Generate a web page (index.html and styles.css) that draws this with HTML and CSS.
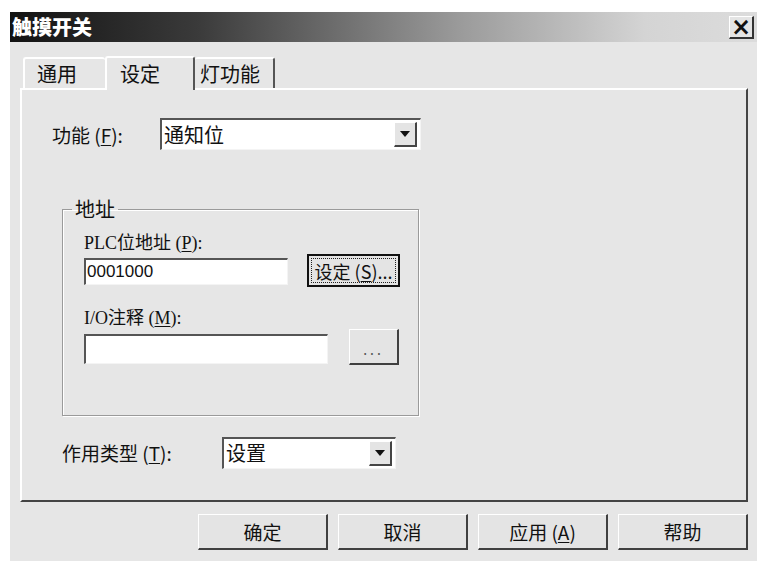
FILE: index.html
```html
<!DOCTYPE html>
<html lang="zh">
<head>
<meta charset="utf-8">
<link rel="stylesheet" href="styles.css">
</head>
<body>
<div class="dialog">
  <div class="titlebar">
    <span class="title">触摸开关</span>
    <span class="close">×</span>
  </div>
  <div class="tabs">
    <div class="tab tab-first">通用</div>
    <div class="tab tab-active">设定</div>
    <div class="tab tab-last">灯功能</div>
  </div>
  <div class="panel">
    <div class="row row-func">
      <span class="label label-func">功能 (<u>F</u>):</span>
      <div class="combo combo-func">
        <span class="combo-text">通知位</span>
        <span class="combo-btn"><i class="arrow"></i></span>
      </div>
    </div>
    <fieldset class="group">
      <legend>地址</legend>
      <div class="field-label">PLC位地址 (<u>P</u>):</div>
      <div class="field-row">
        <div class="input input-addr">0001000</div>
        <div class="btn btn-set"><span class="focus">设定 (<u>S</u>)...</span></div>
      </div>
      <div class="field-label field-label2">I/O注释 (<u>M</u>):</div>
      <div class="field-row">
        <div class="input input-note"></div>
        <div class="btn btn-dots">...</div>
      </div>
    </fieldset>
    <div class="row row-type">
      <span class="label label-type">作用类型 (<u>T</u>):</span>
      <div class="combo combo-type">
        <span class="combo-text">设置</span>
        <span class="combo-btn"><i class="arrow"></i></span>
      </div>
    </div>
  </div>
  <div class="buttons">
    <div class="btn btn-main">确定</div>
    <div class="btn btn-main">取消</div>
    <div class="btn btn-main">应用 (<u>A</u>)</div>
    <div class="btn btn-main">帮助</div>
  </div>
</div>
</body>
</html>
```

FILE: styles.css
```css
* { box-sizing: border-box; }
html, body { margin: 0; padding: 0; background: #ffffff; }
body {
  padding: 12px 0 0 10px;
  font-family: "Noto Sans CJK SC", "DejaVu Sans", sans-serif;
  font-size: 19px;
  color: #111;
}
u { text-decoration: underline; text-underline-offset: 2px; }

.dialog {
  width: 747px;
  height: 549px;
  background: #e6e6e6;
  display: flex;
  flex-direction: column;
}

.titlebar {
  height: 30px;
  background: linear-gradient(to right, #121212 0%, #3a3a3a 25%, #9a9a9a 60%, #d4d4d4 85%, #dcdcdc 100%);
  display: flex;
  align-items: center;
  justify-content: space-between;
  padding: 0 3px 0 2px;
}
.title {
  color: #fff;
  font-weight: 900;
  font-size: 20px;
  line-height: 30px;
}
.close {
  width: 25px;
  height: 23px;
  background: #e4e4e4;
  border-top: 1px solid #fff;
  border-left: 1px solid #fff;
  border-right: 2px solid #333;
  border-bottom: 2px solid #333;
  display: flex;
  align-items: center;
  justify-content: center;
  font-family: "DejaVu Sans", sans-serif;
  font-weight: bold;
  font-size: 24px;
  line-height: 1;
  color: #111;
}

.tabs {
  display: flex;
  align-items: flex-end;
  padding-left: 13px;
  margin-top: 12px;
  height: 34px;
}
.tab {
  height: 31px;
  border-top: 2px solid #fff;
  border-left: 2px solid #fff;
  border-right: 2px solid #555;
  padding: 0 14px;
  display: flex;
  align-items: center;
  font-size: 20px;
  white-space: nowrap;
  border-radius: 3px 3px 0 0;
}
.tab-first { width: 82px; padding-left: 12px; border-right: none; }
.tab-active {
  height: 34px;
  width: 90px;
  padding-left: 13px;
  align-items: flex-start;
  padding-top: 1px;
  margin-bottom: -2px;
  background: #e6e6e6;
  position: relative;
  z-index: 1;
}
.tab-last { width: 80px; padding: 0 0 0 5px; border-left: none; }

.panel {
  margin: 0 9px 0 10px;
  height: 414px;
  border-top: 2px solid #fff;
  border-left: 2px solid #fff;
  border-right: 2px solid #444;
  border-bottom: 2px solid #444;
  display: flex;
  flex-direction: column;
}

.row { display: flex; align-items: center; }
.row-func { margin-top: 28px; padding-left: 30px; height: 32px; }
.label-func { width: 108px; font-size: 19px; }

.combo {
  height: 32px;
  background: #fff;
  border-top: 2px solid #555;
  border-left: 2px solid #555;
  border-right: 1px solid #f4f4f4;
  border-bottom: 1px solid #f4f4f4;
  display: flex;
  align-items: center;
  justify-content: space-between;
  padding: 0 3px 0 2px;
}
.combo-func { width: 261px; }
.combo-text { font-size: 20px; line-height: 1; }
.combo-btn {
  width: 23px;
  height: 25px;
  background: #e4e4e4;
  border-top: 1px solid #fff;
  border-left: 1px solid #fff;
  border-right: 2px solid #444;
  border-bottom: 2px solid #444;
  display: flex;
  align-items: center;
  justify-content: center;
}
.arrow {
  display: block;
  width: 0;
  height: 0;
  border-left: 5px solid transparent;
  border-right: 5px solid transparent;
  border-top: 6px solid #111;
}

.group {
  margin: 48px 0 0 40px;
  width: 357px;
  height: 218px;
  padding: 10px 0 0 21px;
  border: 1px solid #9a9a9a;
  box-shadow: inset 1px 1px 0 #fff, 1px 1px 0 #fff;
}
.group legend {
  padding: 0 3px;
  margin-left: -12px;
  font-size: 20px;
  line-height: 22px;
}
.field-label {
  font-size: 18px;
  line-height: 22px;
  margin-top: 2px;
  font-family: "Liberation Serif", "Noto Sans CJK SC", serif;
}
.field-label2 { margin-top: 20px; }
.field-row { display: flex; align-items: center; }
.input {
  height: 27px;
  background: #fff;
  border-top: 2px solid #555;
  border-left: 2px solid #555;
  border-right: 1px solid #f4f4f4;
  border-bottom: 1px solid #f4f4f4;
  font-family: "Liberation Sans", sans-serif;
  font-size: 17px;
  line-height: 23px;
  padding-left: 1px;
}
.input-addr { width: 204px; margin-top: 2px; }
.input-note { width: 244px; height: 30px; margin-top: 4px; }

.btn {
  background: #e4e4e4;
  border-top: 1px solid #fff;
  border-left: 1px solid #fff;
  border-right: 2px solid #404040;
  border-bottom: 2px solid #404040;
  display: flex;
  align-items: center;
  justify-content: center;
  font-size: 19px;
}
.btn-set {
  width: 93px;
  height: 33px;
  margin-left: 19px;
  border: 2px solid #111;
  padding: 2px;
}
.btn-set .focus {
  width: 100%;
  height: 100%;
  border: 1px dotted #222;
  display: flex;
  align-items: center;
  justify-content: center;
  font-size: 18px;
  white-space: nowrap;
}
.btn-dots {
  width: 50px;
  height: 36px;
  margin-left: 21px;
  font-size: 14px;
  letter-spacing: 3px;
  color: #555;
  padding-top: 4px;
}

.row-type { margin-top: 20px; padding-left: 40px; height: 33px; }
.label-type { width: 160px; font-size: 19px; }
.combo-type { width: 174px; }

.buttons {
  display: flex;
  justify-content: flex-end;
  gap: 10px;
  padding-right: 9px;
  margin-top: 12px;
}
.btn-main {
  width: 130px;
  height: 36px;
  font-size: 19px;
}
```
